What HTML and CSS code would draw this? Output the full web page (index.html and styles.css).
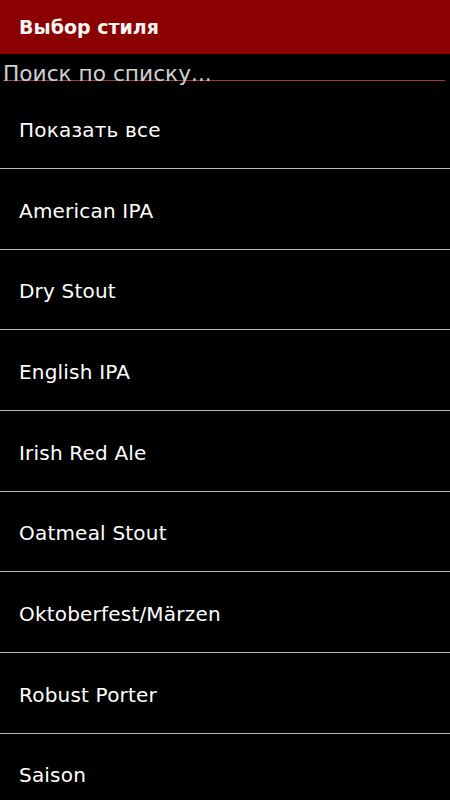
FILE: index.html
```html
<!DOCTYPE html>
<html lang="ru">
<head>
<meta charset="utf-8">
<link rel="stylesheet" href="styles.css">
</head>
<body>
<header class="bar"><h1 class="title">Выбор стиля</h1></header>
<div class="search"><input class="search-input" type="text" placeholder="Поиск по списку..."></div>
<ul class="list">
<li class="item">Показать все</li>
<li class="item">American IPA</li>
<li class="item">Dry Stout</li>
<li class="item">English IPA</li>
<li class="item">Irish Red Ale</li>
<li class="item">Oatmeal Stout</li>
<li class="item">Oktoberfest/Märzen</li>
<li class="item">Robust Porter</li>
<li class="item">Saison</li>
</ul>
</body>
</html>
```
FILE: styles.css
```css
html, body {
  margin: 0;
  padding: 0;
  background: #000;
  font-family: "DejaVu Sans", sans-serif;
  height: 800px;
  overflow: hidden;
}
.bar {
  height: 54px;
  background: #8b0000;
  display: flex;
  align-items: center;
  padding-left: 19px;
}
.title {
  margin: 0;
  color: #f4f4f4;
  font-size: 19px;
  font-weight: 700;
  line-height: 1;
  padding-top: 1px;
}
.search {
  height: 34.33px;
  padding: 0 5px 0 3px;
  box-sizing: border-box;
}
.search-input {
  display: block;
  width: 100%;
  box-sizing: border-box;
  height: 34px;
  margin: 0;
  padding: 4px 0 0 0;
  border: none;
  background: linear-gradient(#a83434, #a83434) no-repeat 0 26px / 100% 1px;
  color: #ddd;
  font-family: "DejaVu Sans", sans-serif;
  font-size: 21.7px;
  line-height: 30px;
  outline: none;
}
.search-input::placeholder {
  color: #d0d0d0;
  opacity: 1;
}
.list {
  list-style: none;
  margin: 0;
  padding: 0;
}
.item {
  box-sizing: border-box;
  height: 80.67px;
  padding-top: 4px;
  border-bottom: 1px solid #b8b8b8;
  display: flex;
  align-items: center;
  padding-left: 19px;
  color: #fff;
  font-size: 20px;
  letter-spacing: 0.2px;
}
```
